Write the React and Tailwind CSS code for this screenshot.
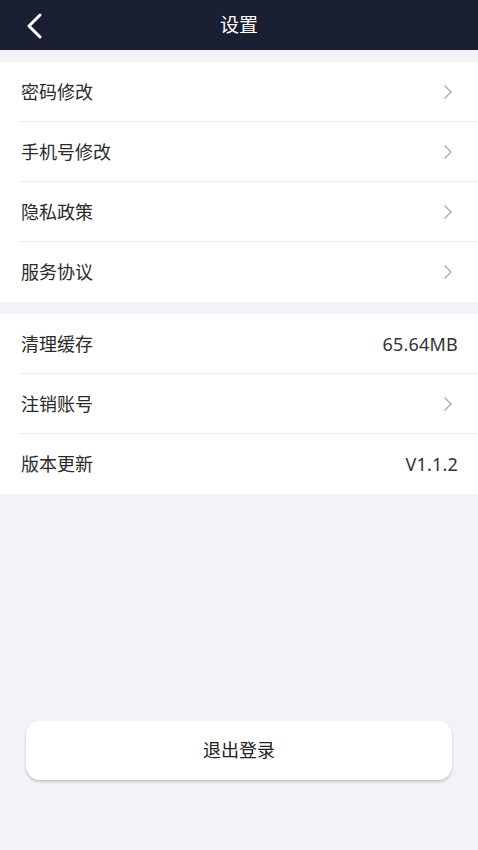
import React from "react";

const Chevron = () => (
  <svg width="12" height="16" viewBox="0 0 12 16" fill="none" className="mr-[4px]">
    <path d="M3 2 L9 8 L3 14" stroke="#a8a8ad" strokeWidth="1.4" strokeLinecap="round" strokeLinejoin="round" />
  </svg>
);

function Row({ label, value, last }) {
  return (
    <div className="relative flex h-[60px] items-center justify-between pl-[21px] pr-[20px]">
      <span className="text-[18px] text-[#2a2a2a]">{label}</span>
      {value ? (
        <span className="text-[18px] text-[#333] tracking-[0.2px]">{value}</span>
      ) : (
        <Chevron />
      )}
      {!last && <div className="absolute bottom-0 left-[20px] right-0 h-px bg-[#ececec]" />}
    </div>
  );
}

export default function App() {
  return (
    <div
      className="flex min-h-[850px] w-full flex-col bg-[#f2f2f7]"
      style={{ fontFamily: '"Noto Sans", "Noto Sans CJK SC", sans-serif' }}
    >
      <div className="relative flex h-[50px] items-center justify-center bg-[#1b1f33]">
        <svg className="absolute left-[25px] top-[13px]" width="20" height="26" viewBox="0 0 20 26" fill="none">
          <path d="M15 2 L4 13 L15 24" stroke="white" strokeWidth="3" strokeLinecap="round" strokeLinejoin="round" />
        </svg>
        <span className="text-[19px] text-white">设置</span>
      </div>

      <div className="mt-[12px] bg-white">
        <Row label="密码修改" />
        <Row label="手机号修改" />
        <Row label="隐私政策" />
        <Row label="服务协议" last />
      </div>

      <div className="mt-[12px] bg-white">
        <Row label="清理缓存" value="65.64MB" />
        <Row label="注销账号" />
        <Row label="版本更新" value="V1.1.2" last />
      </div>

      <div className="mt-[227px] px-[26px]">
        <button className="flex h-[59px] w-full items-center justify-center rounded-[14px] bg-white text-[18px] text-[#222] shadow-[0_2px_3px_rgba(0,0,0,0.18)]">
          退出登录
        </button>
      </div>
    </div>
  );
}
